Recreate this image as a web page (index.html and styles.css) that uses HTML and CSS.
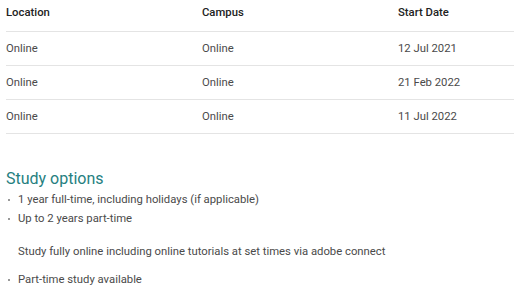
FILE: index.html
```html
<!DOCTYPE html>
<html>
<head>
    <link rel="stylesheet" href="styles.css">
</head>
<body>
    <div class="course">
        <table class="intakes">
            <thead>
                <tr>
                    <th class="col-location">Location</th>
                    <th class="col-campus">Campus</th>
                    <th>Start Date</th>
                </tr>
            </thead>
            <tbody>
                <tr>
                    <td>Online</td>
                    <td>Online</td>
                    <td>12 Jul 2021</td>
                </tr>
                <tr>
                    <td>Online</td>
                    <td>Online</td>
                    <td>21 Feb 2022</td>
                </tr>
                <tr>
                    <td>Online</td>
                    <td>Online</td>
                    <td>11 Jul 2022</td>
                </tr>
            </tbody>
        </table>

        <div class="options">
            <h3>Study options</h3>
            <ul class="bullets">
                <li>1 year full-time, including holidays (if applicable)</li>
                <li>Up to 2 years part-time</li>
            </ul>
            <p class="note">Study fully online including online tutorials at set times via adobe connect</p>
            <ul class="bullets">
                <li>Part-time study available</li>
            </ul>
        </div>
    </div>
</body>
</html>
```

FILE: styles.css
```css
body {
    font-family: Roboto, "Liberation Sans", sans-serif;
    background-color: #fff;
    color: #4a4a4a;
    margin: 0;
    padding: 0;
}
.course {
    padding: 0 0 0 6px;
}
.intakes {
    width: 100%;
    border-collapse: collapse;
    font-size: 11.3px;
}
.intakes th {
    text-align: left;
    vertical-align: top;
    font-weight: 500;
    color: #222;
    height: 25px;
    padding: 6px 0 0;
    line-height: 14px;
    border-bottom: 1px solid #e4e4e4;
}
.intakes td {
    height: 33px;
    padding: 0;
    border-bottom: 1px solid #e4e4e4;
}
.col-location,
.col-campus {
    width: 196px;
}
.options {
    padding-top: 35px;
}
.options h3 {
    margin: 0 0 2px;
    font-size: 16px;
    font-weight: 400;
    color: #267f7f;
}
.bullets {
    list-style: none;
    margin: 0;
    padding: 0;
    font-size: 11.3px;
}
.bullets li {
    position: relative;
    padding-left: 12px;
    line-height: 19px;
}
.bullets li::before {
    content: "";
    position: absolute;
    left: 2px;
    top: 9px;
    width: 2px;
    height: 2px;
    border-radius: 50%;
    background-color: #777;
}
.note {
    margin: 14px 0 9px 12px;
    font-size: 11.3px;
    line-height: 19px;
}
```
